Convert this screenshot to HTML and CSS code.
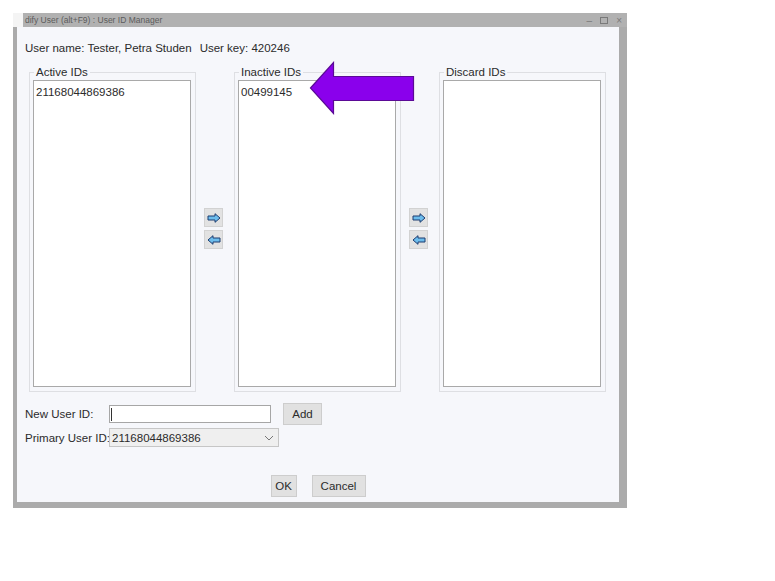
FILE: index.html
```html
<!DOCTYPE html>
<html lang="en">
<head>
  <meta charset="UTF-8">
  <title>User ID Manager</title>
  <link rel="stylesheet" href="styles.css">
</head>
<body>

  <div class="window">
    <!-- title bar -->
    <div class="titlebar">
      <span class="app-icon"></span>
      <span class="title">dify User (alt+F9) : User ID Manager</span>
      <span class="controls">
        <span class="ctl">&ndash;</span>
        <span class="ctl ctl-max"></span>
        <span class="ctl">&times;</span>
      </span>
    </div>

    <div class="frame">
      <div class="content">
        <div class="user-line">
          <span>User name: Tester, Petra Studen</span>
          <span>User key: 420246</span>
        </div>

        <!-- ID lists -->
        <div class="lists">
          <fieldset class="group">
            <legend>Active IDs</legend>
            <div class="listbox">
              <div class="item">21168044869386</div>
            </div>
          </fieldset>

          <div class="movers">
            <button class="mover">
              <svg width="14" height="10" viewBox="0 0 14 10"><path d="M1 3 H8 V0.7 L13 5 L8 9.3 V7 H1 Z" fill="#6cbcec" stroke="#1d3c70" stroke-width="1"/></svg>
            </button>
            <button class="mover">
              <svg width="14" height="10" viewBox="0 0 14 10"><path d="M13 3 H6 V0.7 L1 5 L6 9.3 V7 H13 Z" fill="#6cbcec" stroke="#1d3c70" stroke-width="1"/></svg>
            </button>
          </div>

          <fieldset class="group">
            <legend>Inactive IDs</legend>
            <div class="listbox">
              <div class="item">00499145</div>
            </div>
          </fieldset>

          <div class="movers">
            <button class="mover">
              <svg width="14" height="10" viewBox="0 0 14 10"><path d="M1 3 H8 V0.7 L13 5 L8 9.3 V7 H1 Z" fill="#6cbcec" stroke="#1d3c70" stroke-width="1"/></svg>
            </button>
            <button class="mover">
              <svg width="14" height="10" viewBox="0 0 14 10"><path d="M13 3 H6 V0.7 L1 5 L6 9.3 V7 H13 Z" fill="#6cbcec" stroke="#1d3c70" stroke-width="1"/></svg>
            </button>
          </div>

          <fieldset class="group">
            <legend>Discard IDs</legend>
            <div class="listbox"></div>
          </fieldset>
        </div>

        <!-- new / primary id -->
        <div class="form-row">
          <label class="form-label">New User ID:</label>
          <div class="text-input"><span class="caret"></span></div>
          <button class="btn btn-add">Add</button>
        </div>
        <div class="form-row row-primary">
          <label class="form-label">Primary User ID:</label>
          <div class="combo">
            <span>21168044869386</span>
            <svg width="10" height="6" viewBox="0 0 10 6"><path d="M1 1 L5 5 L9 1" fill="none" stroke="#777" stroke-width="1"/></svg>
          </div>
        </div>

        <div class="actions">
          <button class="btn btn-ok">OK</button>
          <button class="btn btn-cancel">Cancel</button>
        </div>
      </div>
    </div>

    <!-- purple annotation arrow -->
    <svg class="callout" width="108" height="54" viewBox="0 0 108 54">
      <path d="M1.5 27 L24.5 1.5 V15.5 H104.5 V39.5 H24.5 V52.5 Z" fill="#8a00ec" stroke="#5b0a96" stroke-width="1.2"/>
    </svg>
  </div>

</body>
</html>
```

FILE: styles.css
```css
body {
  margin: 0;
  padding: 13px 0 0 13px;
  background: #fff;
  font-family: "Liberation Sans", Arial, sans-serif;
  font-size: 11.5px;
  color: #2b2b2b;
}

.window {
  position: relative;
  width: 614px;
}

.titlebar {
  height: 14px;
  background: #b1b1b1;
  display: flex;
  align-items: center;
  font-size: 8.5px;
  color: #5c5c5c;
}

.app-icon {
  width: 10px;
  height: 14px;
  background: #f4f4f4;
  margin-right: 2px;
}

.title {
  flex: 1;
}

.controls {
  display: flex;
  align-items: center;
  gap: 8px;
  margin-right: 5px;
  color: #7a7a7a;
  font-size: 10px;
}

.ctl-max {
  width: 6px;
  height: 5px;
  border: 1px solid #7a7a7a;
}

.frame {
  border-left: 4px solid #ababab;
  border-right: 8px solid #ababab;
  border-bottom: 6px solid #ababab;
}

.content {
  height: 475px;
  background: #f6f7fb;
  box-sizing: border-box;
  padding: 13px 0 0 8px;
}

.user-line {
  display: flex;
  gap: 8px;
  line-height: 16px;
  height: 16px;
}

.lists {
  display: flex;
  margin: 9px 0 0 4px;
}

.group {
  width: 167px;
  height: 327px;
  box-sizing: border-box;
  margin: 0;
  padding: 1px 4px 3px 3px;
  border: 1px solid #dedfe3;
}

.group legend {
  padding: 0 2px;
  margin-left: 1px;
  line-height: 14px;
  font-size: 11.5px;
}

.listbox {
  height: 307px;
  box-sizing: border-box;
  background: #fff;
  border: 1px solid #a9a9a9;
  padding: 3px 2px;
  line-height: 16px;
}

.movers {
  width: 38px;
  box-sizing: border-box;
  display: flex;
  flex-direction: column;
  align-items: flex-start;
  justify-content: center;
  gap: 3px;
  padding-left: 8px;
}

.mover {
  width: 19px;
  height: 19px;
  padding: 0;
  background: #e2e2e2;
  border: 1px solid #d2d2d2;
  display: flex;
  align-items: center;
  justify-content: center;
}

.form-row {
  display: flex;
  align-items: center;
  margin-top: 11px;
  height: 22px;
}

.row-primary {
  margin-top: 3px;
  height: 19px;
}

.form-label {
  width: 84px;
  flex-shrink: 0;
  white-space: nowrap;
}

.text-input {
  width: 162px;
  height: 18px;
  box-sizing: border-box;
  background: #fff;
  border: 1px solid #a6a6a6;
  display: flex;
  align-items: center;
  padding-left: 1px;
}

.caret {
  width: 1px;
  height: 13px;
  background: #333;
}

.combo {
  width: 170px;
  height: 19px;
  box-sizing: border-box;
  background: #efefef;
  border: 1px solid #c6c6c6;
  display: flex;
  align-items: center;
  justify-content: space-between;
  padding: 0 4px 0 2px;
}

.btn {
  font-family: "Liberation Sans", Arial, sans-serif;
  font-size: 11.5px;
  color: #2b2b2b;
  background: #e1e1e1;
  border: 1px solid #cdcdcd;
  height: 22px;
  padding: 0;
}

.btn-add {
  width: 39px;
  margin-left: 12px;
}

.actions {
  display: flex;
  justify-content: center;
  gap: 15px;
  margin-top: 28px;
  padding-right: 8px;
}

.btn-ok {
  width: 26px;
}

.btn-cancel {
  width: 54px;
}

.callout {
  position: absolute;
  left: 296px;
  top: 48px;
}
```
